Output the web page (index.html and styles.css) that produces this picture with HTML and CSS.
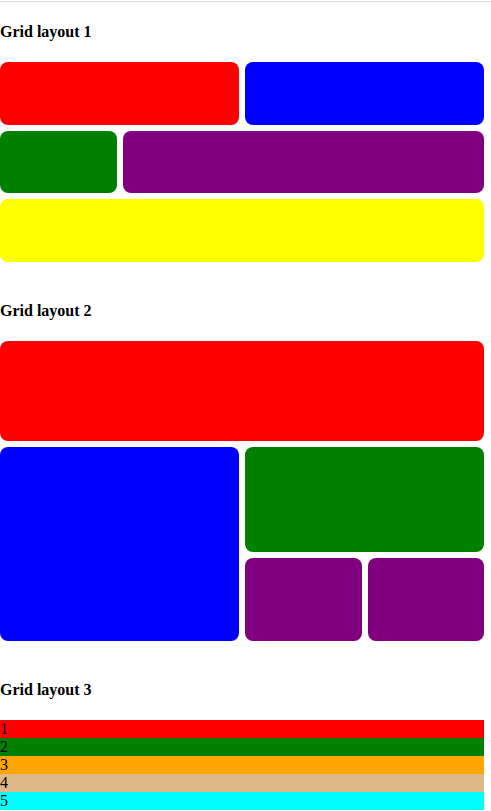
FILE: index.html
```html
<!DOCTYPE html>
<html>
<head>
<meta charset="utf-8">
<link rel="stylesheet" href="styles.css">
</head>
<body>
<div class="topline"></div>
<div class="page">
  <section class="section">
    <h4 class="title">Grid layout 1</h4>
    <div class="grid grid-one">
      <div class="box red span2"></div>
      <div class="box blue span2"></div>
      <div class="box green"></div>
      <div class="box purple span3"></div>
      <div class="box yellow span4"></div>
    </div>
  </section>
  <section class="section">
    <h4 class="title">Grid layout 2</h4>
    <div class="grid grid-two">
      <div class="box red g2-head"></div>
      <div class="box blue g2-side"></div>
      <div class="box green g2-main"></div>
      <div class="box purple g2-a"></div>
      <div class="box purple g2-b"></div>
    </div>
  </section>
  <section class="section">
    <h4 class="title">Grid layout 3</h4>
    <div class="list">
      <div class="row r1">1</div>
      <div class="row r2">2</div>
      <div class="row r3">3</div>
      <div class="row r4">4</div>
      <div class="row r5">5</div>
    </div>
  </section>
</div>
</body>
</html>
```
FILE: styles.css
```css
html, body {
  margin: 0;
  padding: 0;
  background: #fff;
}
body {
  font-family: "Liberation Serif", "Times New Roman", serif;
  font-size: 16px;
  color: #000;
}
.topline {
  height: 1px;
  margin-top: 1px;
  background: #dcdcdc;
}
.page {
  width: 484px;
}
.section {
  padding-bottom: 19px;
}
.title {
  font-size: 16px;
  font-weight: bold;
  margin: 21px 0 21px 0;
}
.grid {
  display: grid;
  grid-template-columns: repeat(4, 1fr);
  gap: 6px;
}
.grid-one {
  height: 200px;
  grid-template-rows: repeat(3, 1fr);
}
.grid-two {
  grid-template-rows: 100px 105px 83px;
}
.box {
  border-radius: 8px;
}
.span2 { grid-column: span 2; }
.span3 { grid-column: span 3; }
.span4 { grid-column: span 4; }
.g2-head { grid-column: 1 / 5; grid-row: 1; }
.g2-side { grid-column: 1 / 3; grid-row: 2 / 4; }
.g2-main { grid-column: 3 / 5; grid-row: 2; }
.g2-a { grid-column: 3; grid-row: 3; }
.g2-b { grid-column: 4; grid-row: 3; }
.red { background: #ff0000; }
.blue { background: #0000ff; }
.green { background: #008000; }
.purple { background: #800080; }
.yellow { background: #ffff00; }
.list {
  display: grid;
  grid-auto-rows: 18px;
}
.row {
  line-height: 18px;
}
.r1 { background: #ff0000; }
.r2 { background: #008000; }
.r3 { background: #ffa500; }
.r4 { background: #deb887; }
.r5 { background: #00ffff; }
```
